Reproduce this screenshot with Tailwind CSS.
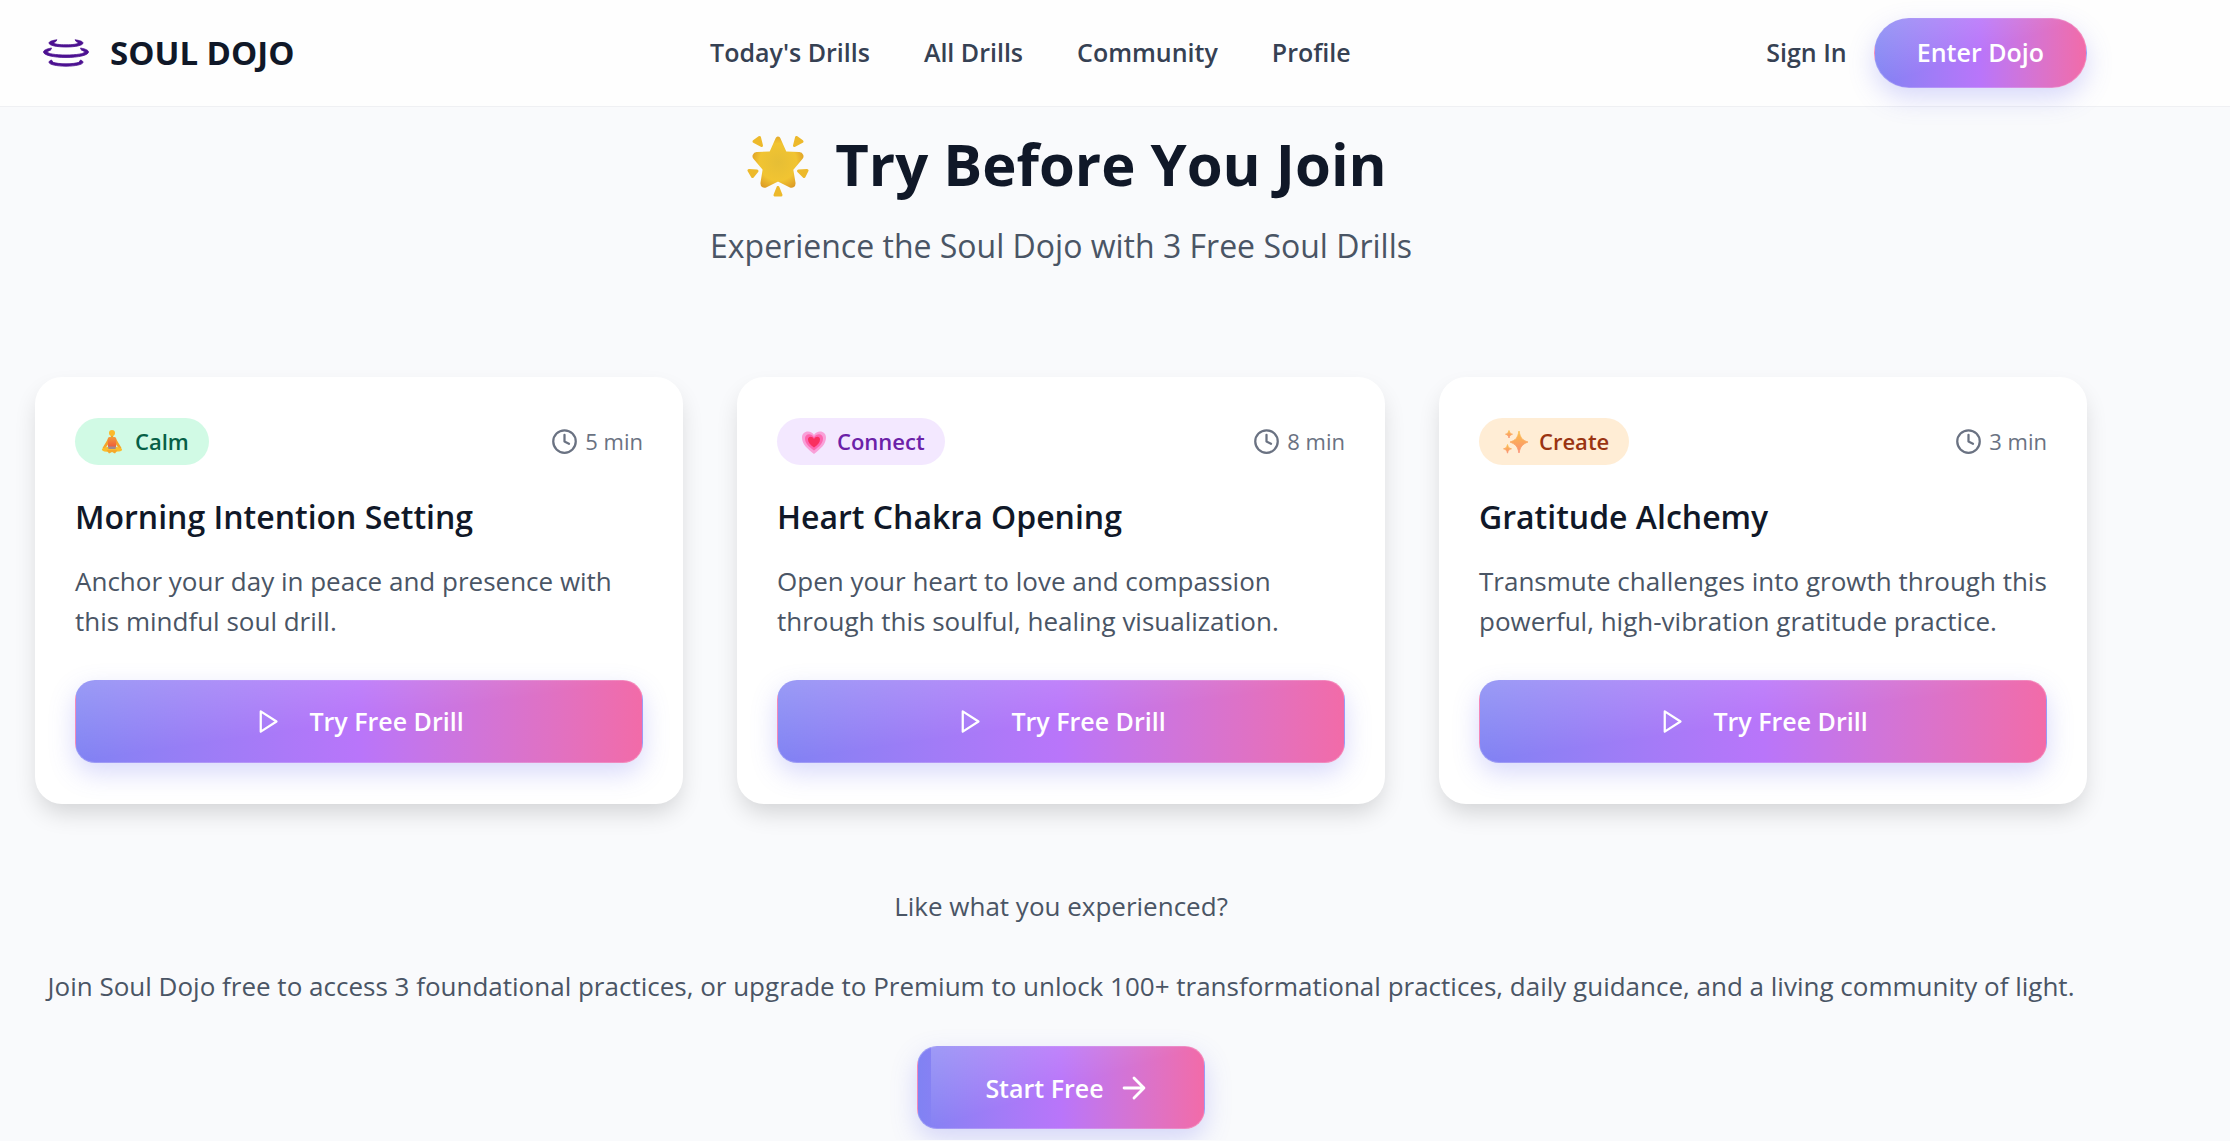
<!DOCTYPE html>
<html lang="en">
<head>
<meta charset="utf-8">
<meta name="viewport" content="width=device-width, initial-scale=1">
<title>Soul Dojo</title>
<script src="https://cdn.jsdelivr.net/npm/@tailwindcss/browser@4"></script>
</head>
<body class="bg-[#f9fafc] font-['Open_Sans','Noto_Sans',sans-serif] text-gray-900">

<!-- Shared symbols -->
<svg class="hidden" aria-hidden="true">
  <symbol id="clock" viewBox="0 0 24 24"><g fill="none" stroke="currentColor" stroke-width="2" stroke-linecap="round" stroke-linejoin="round"><circle cx="12" cy="12" r="10"/><path d="M12 6v6l4 2"/></g></symbol>
  <symbol id="play" viewBox="0 0 24 24"><path d="M6 3l14 9-14 9z" fill="none" stroke="currentColor" stroke-width="2" stroke-linecap="round" stroke-linejoin="round"/></symbol>
</svg>

<header class="border-b border-[#eff0f3] bg-[#fefefe]">
  <div class="flex h-[106px] items-center justify-between pr-[143px] pl-[43px]">
    <a href="#" class="flex items-center gap-[21px] text-[33px] font-bold whitespace-nowrap">
      <svg class="h-[28px] w-[46px]" viewBox="0 0 46 28" fill="#4c1191" stroke="#4c1191" stroke-width=".8" stroke-linejoin="round" aria-hidden="true">
        <path d="M14 .8C9 1.500 6 2.500 6 4c0 2.500 8 4 17 4S40 6.500 40 4c0-1.500-3-2.500-8-3.200l1.500 2c1 .4 1.500.7 1.500 1.200 0 1-5 1.800-12 1.800S11 5 11 4c0-.5.5-.8 1.500-1.200z"/>
        <path d="M8.500 9C3.500 10 .5 11.200.5 13c0 3.200 10 5.500 22.500 5.500S45.500 16.200 45.500 13c0-1.800-3-3-8-4l1 2.200c2 .6 3 1.200 3 1.800 0 1.700-8 3-18.500 3S4.500 14.700 4.500 13c0-.6 1-1.200 3-1.800z"/>
        <path d="M8.500 21c-1.800.6-2.500 1.500-2.500 2.300 0 2.300 8 3.900 17 3.900s17-1.600 17-3.900c0-.8-.7-1.700-2.500-2.300L36 23.300c-2.500.9-7.500 1.500-13 1.500s-10.500-.6-13-1.500z"/>
      </svg>
      <span>SOUL DOJO</span>
    </a>
    <nav class="flex items-center gap-[54px] text-[25px] font-semibold whitespace-nowrap text-gray-700">
      <a href="#">Today's Drills</a>
      <a href="#">All Drills</a>
      <a href="#">Community</a>
      <a href="#">Profile</a>
    </nav>
    <div class="flex items-center gap-[27px] whitespace-nowrap">
      <a href="#" class="text-[25px] font-semibold text-gray-700">Sign In</a>
      <button type="button" class="relative h-[70px] rounded-full border border-white/20 bg-linear-to-r from-[#8082f3] via-[#b975fa] to-[#f26ba8] px-[42px] text-[25px] font-semibold text-white shadow-[0_10px_26px_rgba(99,102,241,0.25)]">
        <span class="absolute inset-0 rounded-full bg-linear-to-br from-white/20 to-transparent to-50%"></span>
        <span class="relative">Enter Dojo</span>
      </button>
    </div>
  </div>
</header>

<main class="pt-[21px] pr-[143px] pb-[11px] pl-[35px]">
  <section class="text-center">
    <h1 class="flex items-center justify-center gap-[26px] pl-3 text-[58px] leading-[72px] font-bold">
      <svg class="mt-1 h-[62px] w-[62px]" viewBox="0 0 62 62" role="img" aria-label="Glowing star">
        <defs>
          <radialGradient id="star" cx=".5" cy=".5" r=".62"><stop offset="0" stop-color="#e6be35"/><stop offset=".65" stop-color="#f1c432"/><stop offset="1" stop-color="#dd9c26"/></radialGradient>
        </defs>
        <path d="M31 4l6 13.500c.5 1 1.500 1.500 2.500 1.500l12.500.5c2 .3 2.500 1.800 1.500 3L44.500 33c-.6.8-.8 1.500-.6 2.500L46 48c.2 2-1 2.800-2.500 2L32.500 44.500c-1-.5-2-.5-3 0L18.500 50c-1.500.8-2.700 0-2.500-2l2-12.500c.2-1 0-1.700-.6-2.500L8.500 22.500c-1-1.200-.5-2.700 1.500-3l12.500-.5c1 0 2-.5 2.500-1.500z" fill="url(#star)" stroke="url(#star)" stroke-width="5" stroke-linejoin="round"/>
        <g fill="#edb92b" stroke="#edb92b" stroke-width="3" stroke-linejoin="round"><path d="M7 6.500l5.500-4 2 8z"/><path d="M49.500 2.500l5.500 4-7.500 4z"/><path d="M2 35.500l8 .5-4.500 5.500z"/><path d="M60 35.500l-8.500.5 5.500 5.500z"/><path d="M31 52.500l-3 7.500h6z"/></g>
      </svg>
      <span>Try Before You Join</span>
    </h1>
    <p class="mt-[22px] text-[32px] leading-[48px] text-gray-600">Experience the Soul Dojo with 3 Free Soul Drills</p>
  </section>

  <section class="mt-[107px] grid grid-cols-3 gap-[54px]">
    <article class="rounded-[27px] bg-white px-10 py-[41px] shadow-[0_12px_24px_-4px_rgba(0,0,0,0.16)]">
      <div class="flex items-center justify-between">
        <span class="flex h-[47px] items-center gap-[10px] rounded-full bg-[#d1fae5] pr-[20px] pl-[24px] text-[22px] font-semibold text-[#065f46]">
          <svg class="h-[26px] w-[26px]" viewBox="0 0 26 26" aria-hidden="true">
            <defs><linearGradient id="body" x1="0" y1="0" x2="0" y2="1"><stop offset="0" stop-color="#f39a3c"/><stop offset="1" stop-color="#ef5a3a"/></linearGradient></defs>
            <path d="M9.500 9L3.500 19l2 1.500L10 14zM16.500 9L22.500 19l-2 1.500L16 14z" fill="#f5a52b"/>
            <path d="M8 18c-3 .3-5.500 1.500-5 3 .5 1.500 4 2 10 1.800s9.500-.3 10-1.800-2-2.700-5-3z" fill="#fbbd2c"/>
            <path d="M7.500 21l2.500 3.500 3-1.500 3 1.500 2.500-3.500z" fill="#f6a92b"/>
            <path d="M10.500 8h5c1.300 0 1.800 1 1.800 2.500L17 18H9l-.3-7.500C8.700 9 9.200 8 10.500 8z" fill="url(#body)"/>
            <path d="M9 17.500h8l-.5 2.500h-7z" fill="#a08a90"/>
            <path d="M11.800 6h2.400v2.500h-2.400z" fill="#f0a028"/>
            <circle cx="13" cy="4" r="3" fill="#fbb92a"/>
          </svg>
          Calm
        </span>
        <span class="flex items-center gap-[7px] text-[22px] text-gray-500"><svg class="h-[27px] w-[27px]" aria-hidden="true"><use href="#clock"/></svg>5 min</span>
      </div>
      <h2 class="mt-8 text-[32px] leading-10 font-semibold">Morning Intention Setting</h2>
      <p class="mt-6 text-[26px] leading-10 text-gray-600">Anchor your day in peace and presence with this mindful soul drill.</p>
      <button type="button" class="relative mt-[39px] flex h-[83px] w-full items-center justify-center gap-7 rounded-[20px] border border-white/20 bg-linear-to-r from-[#8082f3] via-[#b975fa] to-[#f26ba8] text-[25px] font-semibold text-white shadow-[0_10px_26px_rgba(99,102,241,0.25)]">
        <span class="absolute inset-0 rounded-[19px] bg-linear-to-br from-white/20 to-transparent to-50%"></span>
        <svg class="relative h-[27px] w-[27px]" aria-hidden="true"><use href="#play"/></svg>
        <span class="relative">Try Free Drill</span>
      </button>
    </article>

    <article class="rounded-[27px] bg-white px-10 py-[41px] shadow-[0_12px_24px_-4px_rgba(0,0,0,0.16)]">
      <div class="flex items-center justify-between">
        <span class="flex h-[47px] items-center gap-[10px] rounded-full bg-[#f3e8ff] pr-[20px] pl-[24px] text-[22px] font-semibold text-[#6b21a8]">
          <svg class="h-[26px] w-[26px]" viewBox="0 0 26 26" aria-hidden="true">
            <path d="M13 25C6 19.500 1 15 1 8.500 1 5 3.500 2.500 7 2.500c2.500 0 4.700 1.200 6 3.500 1.300-2.300 3.500-3.500 6-3.500 3.500 0 6 2.500 6 6C25 15 20 19.500 13 25z" fill="#f9a0d8"/>
            <path d="M13 21.500C7.500 17.500 4 14 4 9.500 4 7 5.700 5.200 8 5.200c2 0 3.800 1 5 3 1.200-2 3-3 5-3 2.300 0 4 1.800 4 4.300 0 4.500-3.500 8-9 12z" fill="#fd66b0"/>
            <path d="M13 18.500c-4-3-6-5.200-6-8C7 8.800 8.200 7.800 9.600 7.800c1.400 0 2.600.8 3.400 2.200.8-1.400 2-2.200 3.400-2.200 1.400 0 2.600 1 2.600 2.700 0 2.800-2 5-6 8z" fill="#f92f5f"/>
          </svg>
          Connect
        </span>
        <span class="flex items-center gap-[7px] text-[22px] text-gray-500"><svg class="h-[27px] w-[27px]" aria-hidden="true"><use href="#clock"/></svg>8 min</span>
      </div>
      <h2 class="mt-8 text-[32px] leading-10 font-semibold">Heart Chakra Opening</h2>
      <p class="mt-6 text-[26px] leading-10 text-gray-600">Open your heart to love and compassion through this soulful, healing visualization.</p>
      <button type="button" class="relative mt-[39px] flex h-[83px] w-full items-center justify-center gap-7 rounded-[20px] border border-white/20 bg-linear-to-r from-[#8082f3] via-[#b975fa] to-[#f26ba8] text-[25px] font-semibold text-white shadow-[0_10px_26px_rgba(99,102,241,0.25)]">
        <span class="absolute inset-0 rounded-[19px] bg-linear-to-br from-white/20 to-transparent to-50%"></span>
        <svg class="relative h-[27px] w-[27px]" aria-hidden="true"><use href="#play"/></svg>
        <span class="relative">Try Free Drill</span>
      </button>
    </article>

    <article class="rounded-[27px] bg-white px-10 py-[41px] shadow-[0_12px_24px_-4px_rgba(0,0,0,0.16)]">
      <div class="flex items-center justify-between">
        <span class="flex h-[47px] items-center gap-[10px] rounded-full bg-[#ffedd5] pr-[20px] pl-[24px] text-[22px] font-semibold text-[#9a3412]">
          <svg class="h-[26px] w-[26px]" viewBox="0 0 26 26" aria-hidden="true">
            <defs><linearGradient id="spark" x1="0" y1="0" x2="0" y2="1"><stop offset="0" stop-color="#fbc04a"/><stop offset="1" stop-color="#fb8f74"/></linearGradient></defs>
            <g fill="url(#spark)" stroke="url(#spark)" stroke-width=".8" stroke-linejoin="round">
              <path d="M16 2c1.500 7 3 9 9 11-6 2.500-7.500 4.500-9 11-1.500-6.500-3-8.500-9-11 6-2 7.500-4 9-11z"/>
              <path d="M6 1.500c.7 2.500 1.200 3 3.500 3.700-2.300.8-2.800 1.300-3.500 3.800-.7-2.500-1.200-3-3.500-3.800C4.800 4.500 5.300 4 6 1.500z"/>
              <path d="M4.500 15.500c.8 2.900 1.400 3.600 4 4.300-2.600.8-3.200 1.500-4 4.400-.8-2.900-1.400-3.600-4-4.400 2.600-.7 3.200-1.400 4-4.300z"/>
            </g>
          </svg>
          Create
        </span>
        <span class="flex items-center gap-[7px] text-[22px] text-gray-500"><svg class="h-[27px] w-[27px]" aria-hidden="true"><use href="#clock"/></svg>3 min</span>
      </div>
      <h2 class="mt-8 text-[32px] leading-10 font-semibold">Gratitude Alchemy</h2>
      <p class="mt-6 text-[26px] leading-10 text-gray-600">Transmute challenges into growth through this powerful, high-vibration gratitude practice.</p>
      <button type="button" class="relative mt-[39px] flex h-[83px] w-full items-center justify-center gap-7 rounded-[20px] border border-white/20 bg-linear-to-r from-[#8082f3] via-[#b975fa] to-[#f26ba8] text-[25px] font-semibold text-white shadow-[0_10px_26px_rgba(99,102,241,0.25)]">
        <span class="absolute inset-0 rounded-[19px] bg-linear-to-br from-white/20 to-transparent to-50%"></span>
        <svg class="relative h-[27px] w-[27px]" aria-hidden="true"><use href="#play"/></svg>
        <span class="relative">Try Free Drill</span>
      </button>
    </article>
  </section>

  <section class="mt-[82px] flex flex-col items-center gap-10 text-center text-[26px] leading-10 text-gray-600">
    <p>Like what you experienced?</p>
    <p>Join Soul Dojo free to access 3 foundational practices, or upgrade to Premium to unlock 100+ transformational practices, daily guidance, and a living community of light.</p>
    <button type="button" class="relative flex h-[83px] items-center gap-[13px] rounded-[20px] border border-white/20 bg-linear-to-r from-[#8082f3] via-[#b975fa] to-[#f26ba8] pr-[53px] pl-[67px] text-[25px] font-semibold text-white shadow-[0_10px_26px_rgba(99,102,241,0.25)]">
      <span class="absolute inset-y-0 right-0 left-[13px] rounded-r-[19px] bg-linear-to-br from-white/20 to-transparent to-50%"></span>
      <span class="relative">Start Free</span>
      <svg class="relative h-[34px] w-[34px]" viewBox="0 0 24 24" fill="none" stroke="currentColor" stroke-width="2" stroke-linecap="round" stroke-linejoin="round" aria-hidden="true"><path d="M5 12h14M12 5l7 7-7 7"/></svg>
    </button>
  </section>
</main>
</body>
</html>
